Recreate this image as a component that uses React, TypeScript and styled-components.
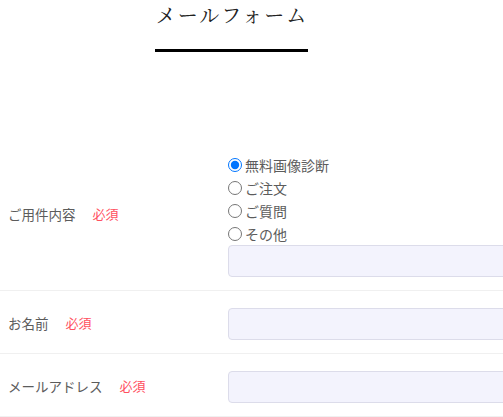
import React from "react";
import styled, { createGlobalStyle } from "styled-components";

const Global = createGlobalStyle`
  html, body { margin: 0; padding: 0; background: #fff; }
  body {
    font-family: "Noto Sans CJK JP", "Noto Sans", sans-serif;
    color: #555;
    overflow: hidden;
  }
`;

const Page = styled.div`
  width: 640px;
`;

const Header = styled.header`
  width: 463px;
  display: flex;
  justify-content: center;
  padding-top: 2px;
  height: 135px;
  align-items: flex-start;
`;

const Title = styled.h2`
  margin: 0;
  font-family: "Noto Serif CJK JP", "IPAMincho", "Liberation Serif", serif;
  font-weight: 400;
  font-size: 20px;
  letter-spacing: 2px;
  line-height: 26px;
  color: #222;
  padding: 0 0 21px 1px;
  border-bottom: 3px solid #000;
`;

const Form = styled.form`
  display: flex;
  flex-direction: column;
`;

const Row = styled.div`
  display: flex;
  align-items: center;
  padding: 17px 0 13px 8px;
  border-bottom: 1px solid #f0f0f0;
`;

const Label = styled.div`
  width: 220px;
  flex: none;
  font-size: 13.5px;
  line-height: 20px;
  color: #5c5c5c;
  display: flex;
  align-items: center;
  margin-bottom: 3px;
`;

const Required = styled.span`
  color: #ff5060;
  font-size: 13px;
  margin-left: 17px;
`;

const Field = styled.div`
  display: flex;
  flex-direction: column;
  width: 400px;
`;

const RadioItem = styled.label`
  display: flex;
  align-items: center;
  height: 22.75px;
  font-size: 14px;
  color: #5c5c5c;
`;

const Radio = styled.input`
  margin: 0 3px 0 0;
  width: 14px;
  height: 14px;
  accent-color: #0075ff;
`;

const TextInput = styled.input`
  box-sizing: border-box;
  width: 400px;
  height: 32px;
  background: #f3f3fd;
  border: 1px solid #dcdcea;
  border-radius: 4px;
  outline: none;
`;

const options = ["無料画像診断", "ご注文", "ご質問", "その他"];

export default function App() {
  return (
    <Page>
      <Global />
      <Header>
        <Title>メールフォーム</Title>
      </Header>
      <Form>
        <Row>
          <Label>
            ご用件内容<Required>必須</Required>
          </Label>
          <Field>
            {options.map((o, i) => (
              <RadioItem key={o}>
                <Radio type="radio" name="kind" defaultChecked={i === 0} />
                {o}
              </RadioItem>
            ))}
            <TextInput type="text" />
          </Field>
        </Row>
        <Row>
          <Label>
            お名前<Required>必須</Required>
          </Label>
          <Field>
            <TextInput type="text" />
          </Field>
        </Row>
        <Row>
          <Label>
            メールアドレス<Required>必須</Required>
          </Label>
          <Field>
            <TextInput type="text" />
          </Field>
        </Row>
      </Form>
    </Page>
  );
}
